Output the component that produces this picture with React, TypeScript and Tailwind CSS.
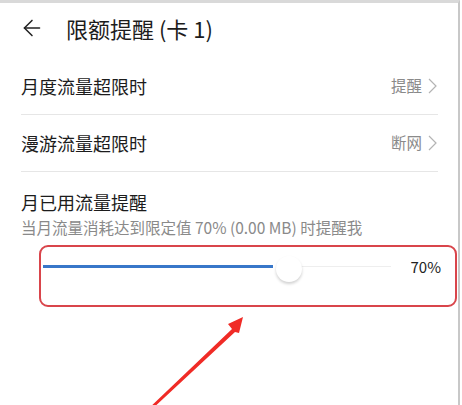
import { ArrowLeft } from 'lucide-react';

const FONT = { fontFamily: '"Noto Sans CJK SC", "Noto Sans", sans-serif' };

function Row({ label, value }: { label: string; value: string }) {
  return (
    <div className="flex h-[57px] items-center justify-between border-b border-[#e6e6e6]">
      <span className="text-[18px] text-[#1c1c1c]">{label}</span>
      <span className="flex items-center gap-[6px] text-[15.5px] text-[#8a8a8a]">
        {value}
        <svg width="9" height="16" viewBox="0 0 9 16" fill="none" className="mr-[1px]">
          <polyline points="1,1 8,8 1,15" stroke="#b4b4b4" strokeWidth="1.2" />
        </svg>
      </span>
    </div>
  );
}

export default function App() {
  const pct = 70;
  return (
    <div
      style={FONT}
      className="relative h-[405px] w-[460px] overflow-hidden border-t-[3px] border-r-2 border-t-[#d9d9d9] border-r-[#c8c8c8] bg-white"
    >
      {/* Header */}
      <div className="flex h-[55px] items-center gap-[21px] pb-[5px] pl-[19px]">
        <ArrowLeft size={26} strokeWidth={1.4} className="text-[#222]" />
        <span className="text-[22px] text-[#1c1c1c]">限额提醒 (卡 1)</span>
      </div>

      <div className="px-[21px] pr-[20px]">
        <Row label="月度流量超限时" value="提醒" />
        <Row label="漫游流量超限时" value="断网" />

        <div className="pt-[17px]">
          <p className="text-[18px] leading-[26px] text-[#1c1c1c]">月已用流量提醒</p>
          <p className="mt-[1px] text-[15.5px] leading-[22px] text-[#8a8a8a]">
            当月流量消耗达到限定值 70% (0.00 MB) 时提醒我
          </p>
        </div>
      </div>

      {/* Highlighted slider */}
      <div className="ml-[39px] mr-[1px] mt-[7px] h-[62px] rounded-[9px] border-2 border-[#d9454b]">
        <div className="flex h-[40px] items-center pl-[2px] pr-[14px]">
          <div className="relative h-[20px] w-[348px]">
            <div className="absolute left-0 top-[8px] h-[3px] w-[230px] bg-[#3877c9]" />
            <div className="absolute left-[256px] right-0 top-[9px] h-[1px] bg-[#eeeeee]" />
            <div
              className="absolute top-[-1px] h-[26px] w-[26px] -translate-x-1/2 rounded-full bg-white shadow-[0_2px_3px_rgba(0,0,0,0.18)]"
              style={{ left: `${(pct / 100) * 348 + 2}px` }}
            />
          </div>
          <span className="ml-auto text-[15px] text-[#222]">{pct}%</span>
        </div>
      </div>

      {/* Red annotation arrow */}
      <svg className="absolute left-0 top-0" width="462" height="405" viewBox="0 0 462 405">
        <polygon points="146,408 232,326 228,321 243,314 239,330 235,329 150,408" fill="#f02b26" />
      </svg>
    </div>
  );
}
